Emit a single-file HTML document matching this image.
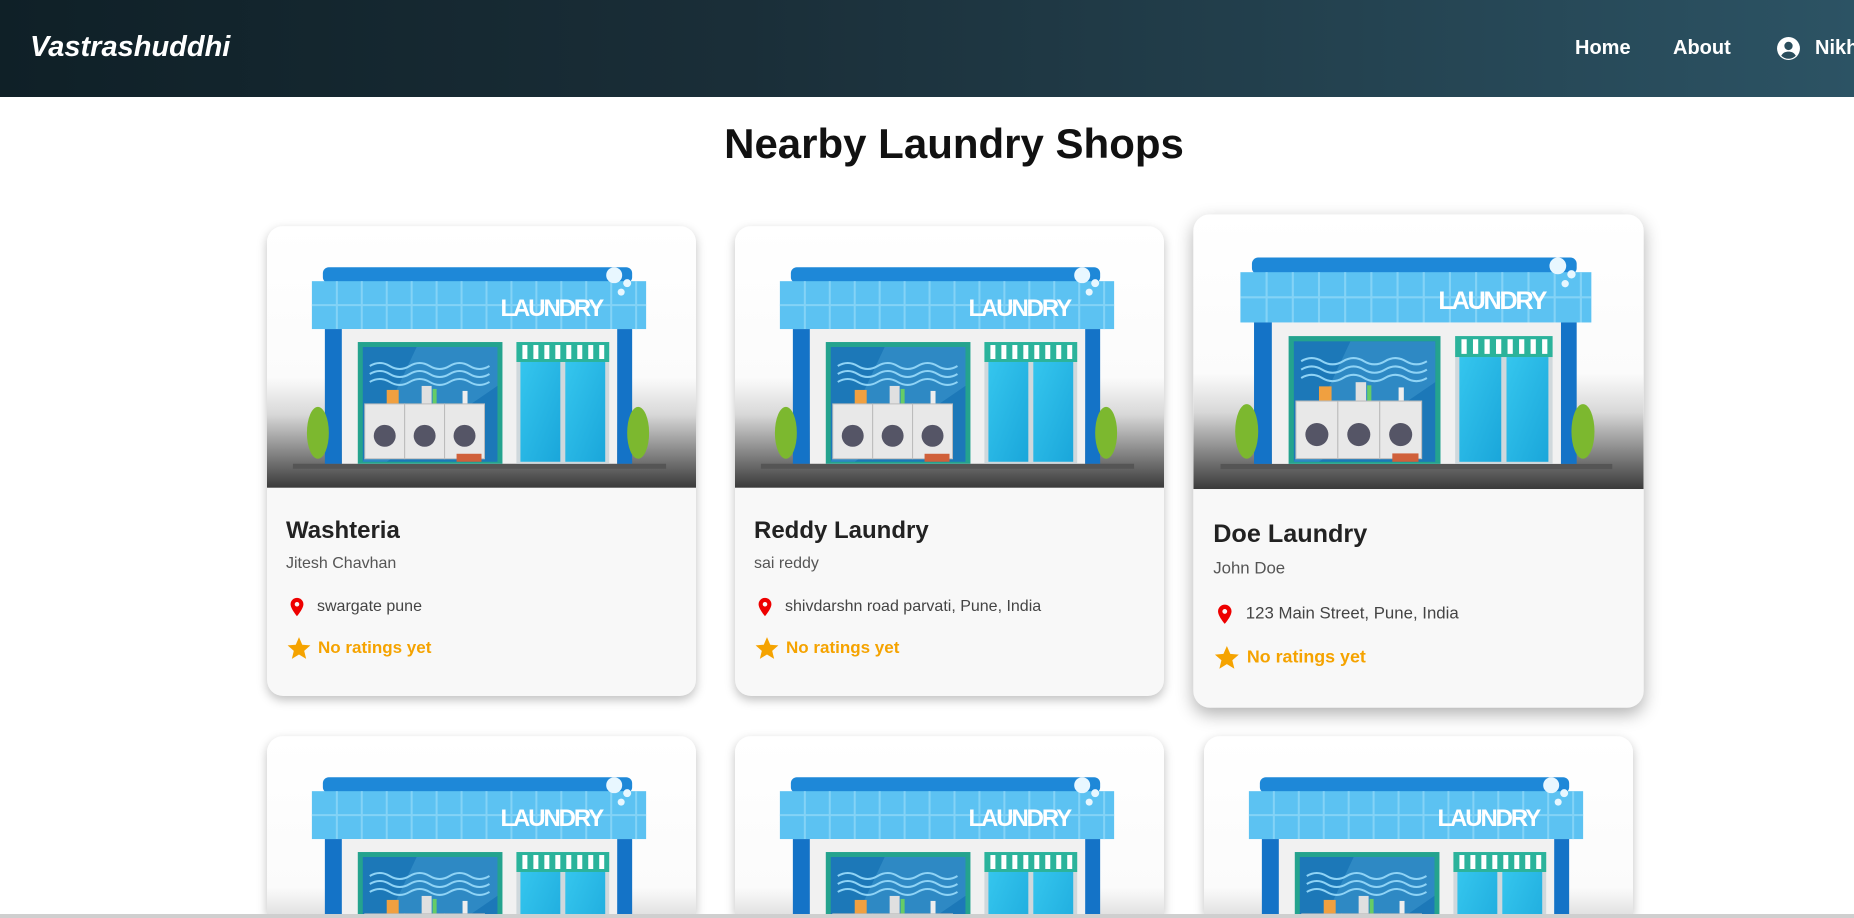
<!DOCTYPE html>
<html><head><meta charset="utf-8">
<style>
*{box-sizing:border-box;margin:0;padding:0}
html,body{width:1854px;height:918px;overflow:hidden;background:#fff;font-family:"Liberation Sans",Arial,sans-serif}
#wrap{position:relative;width:1854px;height:918px;overflow:hidden}
.nav{position:absolute;left:0;top:0;width:1854px;height:97px;background:linear-gradient(90deg,#0f2027 0%,#1a2e38 40%,#2c5364 100%)}
.logo{position:absolute;left:30px;top:31px;color:#fff;font-size:29px;font-weight:bold;font-style:italic}
.nl{position:absolute;top:37px;color:#fff;font-size:20px;font-weight:bold}
h1{position:absolute;left:0;width:1908px;top:120px;text-align:center;font-size:42px;font-weight:bold;color:#111}
.card{position:absolute;width:429px;height:470px;background:#f8f8f8;border-radius:16px;overflow:hidden;box-shadow:0 4px 10px rgba(0,0,0,.25)}
.card.hov{transform:scale(1.05);box-shadow:0 6px 16px rgba(0,0,0,.3)}
.card svg{display:block}
.nm{position:absolute;left:19px;top:291px;font-size:24px;font-weight:bold;color:#222}
.ow{position:absolute;left:19px;top:329px;font-size:16px;color:#555}
.ad{position:absolute;left:19px;top:368px;font-size:16px;color:#444;display:flex;align-items:center}
.ad svg{margin-right:9px}
.rt{position:absolute;left:19px;top:409px;font-size:17px;font-weight:bold;color:#f5a300;display:flex;align-items:center}
.rt svg{margin-right:6px}
.bar{position:absolute;left:0;top:914px;width:1854px;height:4px;background:#cfcfcf}
</style></head><body>
<div id="wrap">
<svg width="0" height="0" style="position:absolute">
<defs>
<linearGradient id="bg" x1="0" y1="0" x2="0" y2="1">
<stop offset="0" stop-color="#fff"/><stop offset="0.58" stop-color="#fbfbfb"/><stop offset="0.72" stop-color="#d8d8d8"/><stop offset="1" stop-color="#3a3a3a"/></linearGradient>
<linearGradient id="gl" x1="0" y1="0" x2="1" y2="1"><stop offset="0" stop-color="#35c6ee"/><stop offset="1" stop-color="#1aa6da"/></linearGradient>
<symbol id="shop" viewBox="0 0 430 262">
<rect width="430" height="262" fill="url(#bg)"/>
<rect x="26" y="238" width="374" height="5" fill="#555"/>
<rect x="56" y="41" width="310" height="16" rx="6" fill="#1e88d8"/>
<rect x="45" y="55" width="335" height="48" fill="#5cc2f2"/>
<g stroke="#8fd8f8" stroke-width="2" opacity=".8">
<path d="M45 79H380M70 55v48M95 55v48M120 55v48M145 55v48M170 55v48M195 55v48M220 55v48M245 55v48M270 55v48M295 55v48M320 55v48M345 55v48M370 55v48"/></g>
<text x="286" y="90" text-anchor="middle" font-family="Liberation Sans" font-weight="bold" font-size="24" fill="#fff" textLength="104">LAUNDRY</text>
<circle cx="348" cy="49" r="8" fill="#e8f7ff"/><circle cx="361" cy="57" r="4" fill="#e8f7ff"/><circle cx="355" cy="66" r="3.5" fill="#e8f7ff"/>
<rect x="75" y="103" width="276" height="135" fill="#f1f1f1"/>
<rect x="58" y="103" width="17" height="135" fill="#1473c7"/>
<rect x="351" y="103" width="15" height="135" fill="#1473c7"/>
<rect x="91" y="116" width="145" height="122" fill="#24a38e"/>
<rect x="96" y="121" width="135" height="115" fill="#1c78b8"/>
<path d="M150 121L231 121L231 160L120 236L96 236Z" fill="#3a95cc" opacity=".6"/>
<g stroke="#8fd3f5" stroke-width="2" fill="none"><path d="M103 140q10-6 20 0t20 0t20 0t20 0t20 0t20 0"/><path d="M103 148q10-6 20 0t20 0t20 0t20 0t20 0t20 0"/><path d="M103 156q10-6 20 0t20 0t20 0t20 0t20 0t20 0"/></g>
<rect x="120" y="164" width="12" height="14" fill="#f0a040"/><rect x="155" y="160" width="10" height="18" fill="#e0e0e0"/><rect x="166" y="163" width="4" height="15" fill="#6c6"/><rect x="196" y="165" width="5" height="13" fill="#eee"/>
<g fill="#e8e8e8" stroke="#bbb"><rect x="98" y="178" width="40" height="55"/><rect x="138" y="178" width="40" height="55"/><rect x="178" y="178" width="40" height="55"/></g>
<g fill="#556"><circle cx="118" cy="210" r="11"/><circle cx="158" cy="210" r="11"/><circle cx="198" cy="210" r="11"/></g>
<rect x="190" y="228" width="25" height="8" fill="#d0603a"/>
<rect x="250" y="116" width="93" height="122" fill="#cfd8dc"/>
<rect x="254" y="136" width="40" height="100" fill="url(#gl)"/><rect x="299" y="136" width="40" height="100" fill="url(#gl)"/>
<rect x="250" y="116" width="93" height="20" fill="#2bb39b"/>
<g fill="#fff"><rect x="256" y="119" width="5" height="14"/><rect x="267" y="119" width="5" height="14"/><rect x="278" y="119" width="5" height="14"/><rect x="289" y="119" width="5" height="14"/><rect x="300" y="119" width="5" height="14"/><rect x="311" y="119" width="5" height="14"/><rect x="322" y="119" width="5" height="14"/><rect x="333" y="119" width="5" height="14"/></g>
<ellipse cx="51" cy="207" rx="11" ry="26" fill="#7cb82f"/><ellipse cx="372" cy="207" rx="11" ry="26" fill="#7cb82f"/>
</symbol>
<symbol id="pin" viewBox="0 0 24 24"><path d="M12 2a7 7 0 0 0-7 7c0 5 7 13 7 13s7-8 7-13a7 7 0 0 0-7-7zm0 9.5a2.5 2.5 0 1 1 0-5 2.5 2.5 0 0 1 0 5z" fill="#e00"/></symbol>
<symbol id="star" viewBox="0 0 24 24"><path d="M12 2l3 7 7.5.6-5.7 5 1.8 7.4L12 18l-6.6 4 1.8-7.4-5.7-5L9 9z" fill="#f5a300"/></symbol>
</defs></svg>

<div class="nav">
<div class="logo">Vastrashuddhi</div>
<div class="nl" style="left:1575px">Home</div>
<div class="nl" style="left:1673px">About</div>
<svg style="position:absolute;left:1776px;top:36px" width="25" height="25" viewBox="0 0 24 24"><circle cx="12" cy="12" r="11" fill="#fff"/><circle cx="12" cy="9.5" r="4" fill="#2a4d5c"/><path d="M5 19c1.5-3 4-4 7-4s5.5 1 7 4a10 10 0 0 1-14 0z" fill="#2a4d5c"/></svg>
<div class="nl" style="left:1815px">Nikhil</div>
</div>

<h1>Nearby Laundry Shops</h1>

<div class="card" style="left:267px;top:226px"><svg width="429" height="262"><use href="#shop"/></svg>
<div class="nm">Washteria</div><div class="ow">Jitesh Chavhan</div>
<div class="ad"><svg width="22" height="26"><use href="#pin"/></svg>swargate pune</div>
<div class="rt"><svg width="26" height="26"><use href="#star"/></svg>No ratings yet</div></div>

<div class="card" style="left:735px;top:226px"><svg width="429" height="262"><use href="#shop"/></svg>
<div class="nm">Reddy Laundry</div><div class="ow">sai reddy</div>
<div class="ad"><svg width="22" height="26"><use href="#pin"/></svg>shivdarshn road parvati, Pune, India</div>
<div class="rt"><svg width="26" height="26"><use href="#star"/></svg>No ratings yet</div></div>

<div class="card hov" style="left:1204px;top:226px"><svg width="429" height="262"><use href="#shop"/></svg>
<div class="nm">Doe Laundry</div><div class="ow">John Doe</div>
<div class="ad"><svg width="22" height="26"><use href="#pin"/></svg>123 Main Street, Pune, India</div>
<div class="rt"><svg width="26" height="26"><use href="#star"/></svg>No ratings yet</div></div>

<div class="card" style="left:267px;top:736px;height:178px;border-radius:16px 16px 0 0"><svg width="429" height="262"><use href="#shop"/></svg></div>
<div class="card" style="left:735px;top:736px;height:178px;border-radius:16px 16px 0 0"><svg width="429" height="262"><use href="#shop"/></svg></div>
<div class="card" style="left:1204px;top:736px;height:178px;border-radius:16px 16px 0 0"><svg width="429" height="262"><use href="#shop"/></svg></div>

<div class="bar"></div>
</div>
</body></html>
